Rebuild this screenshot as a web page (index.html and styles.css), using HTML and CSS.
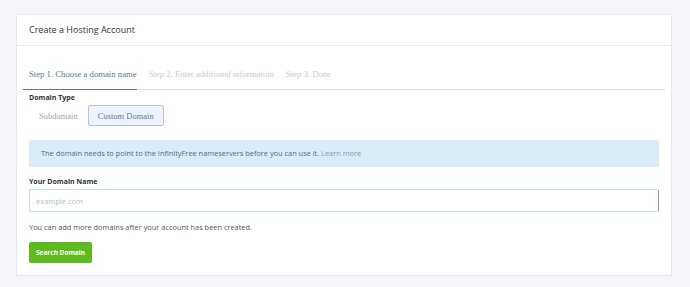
FILE: index.html
```html
<!DOCTYPE html>
<html>
<head>
    <title>Create a Hosting Account</title>
    <link rel="stylesheet" href="styles.css">
</head>
<body>
    <div class="card">
        <div class="card-header">Create a Hosting Account</div>
        <div class="card-body">
            <div class="steps">
                <span class="step active">Step 1. Choose a domain name</span>
                <span class="step">Step 2. Enter additional information</span>
                <span class="step">Step 3. Done</span>
            </div>
            <form class="domain-form">
                <div class="form-label">Domain Type</div>
                <div class="btn-group">
                    <button type="button" class="toggle">Subdomain</button>
                    <button type="button" class="toggle selected">Custom Domain</button>
                </div>
                <div class="alert">
                    The domain needs to point to the InfinityFree nameservers before you can use it. <a href="#">Learn more</a>
                </div>
                <label class="form-label" for="domain">Your Domain Name</label>
                <input type="text" id="domain" name="domain" placeholder="example.com">
                <p class="help">You can add more domains after your account has been created.</p>
                <button type="submit" class="btn-search">Search Domain</button>
            </form>
        </div>
    </div>
</body>
</html>
```

FILE: styles.css
```css
body {
    margin: 0;
    padding: 14px 18px 11px 16px;
    background-color: #f4f5f8;
    font-family: "Open Sans", sans-serif;
    color: #333;
}

.card {
    background-color: #fff;
    border: 1px solid #e6e8ec;
    height: 262px;
    box-sizing: border-box;
}

.card-header {
    height: 30px;
    line-height: 30px;
    padding: 0 12px;
    font-size: 9px;
    color: #333;
    border-bottom: 1px solid #e6e8ec;
}

.card-body {
    padding: 0 6px;
}

.steps {
    display: flex;
    padding-top: 23px;
    border-bottom: 1px solid #dcdfe3;
}

.step {
    font-family: "Liberation Serif", serif;
    font-size: 8.7px;
    color: #c8ccd2;
    padding: 0 0 10px 6px;
    margin-right: 6px;
}

.step.active {
    color: #5d7a9c;
    border-bottom: 1px solid #6a7686;
    margin-bottom: -1px;
}

.domain-form {
    padding: 0 6px;
}

.form-label {
    display: block;
    font-size: 7px;
    font-weight: 700;
    color: #333;
    margin-top: 3px;
}

.btn-group {
    display: flex;
    margin-top: 3px;
}

.toggle {
    font-family: "Liberation Serif", serif;
    font-size: 8.5px;
    height: 21px;
    padding: 0 9px;
    background-color: #fff;
    border: 1px solid #fff;
    border-radius: 2px;
    color: #a0a4aa;
}

.toggle.selected {
    background-color: #eef3fb;
    border-color: #b9c3d4;
    color: #5d7a9c;
}

.alert {
    margin-top: 14px;
    height: 27px;
    line-height: 27px;
    padding: 0 12px;
    background-color: #d9ecf8;
    border-radius: 2px;
    font-size: 7.4px;
    color: #4e6d8c;
}

.alert a {
    color: #7f9bb8;
    text-decoration: none;
}

label.form-label {
    margin-top: 10px;
}

input {
    display: block;
    box-sizing: border-box;
    width: 100%;
    height: 23px;
    margin-top: 3px;
    padding: 0 6px;
    border: 1px solid #bfe0f2;
    border-right-color: #7fa3b8;
    border-radius: 2px;
    font-family: "Open Sans", sans-serif;
    font-size: 7.5px;
    color: #333;
}

input::placeholder {
    color: #b8bcc2;
}

.help {
    margin: 10px 0 0;
    font-size: 7.4px;
    color: #555;
}

.btn-search {
    margin-top: 10px;
    height: 21px;
    padding: 0 7px;
    background-color: #5fba1e;
    border: none;
    border-radius: 2px;
    color: #fff;
    font-family: "Open Sans", sans-serif;
    font-size: 6.5px;
    font-weight: 700;
}
```
